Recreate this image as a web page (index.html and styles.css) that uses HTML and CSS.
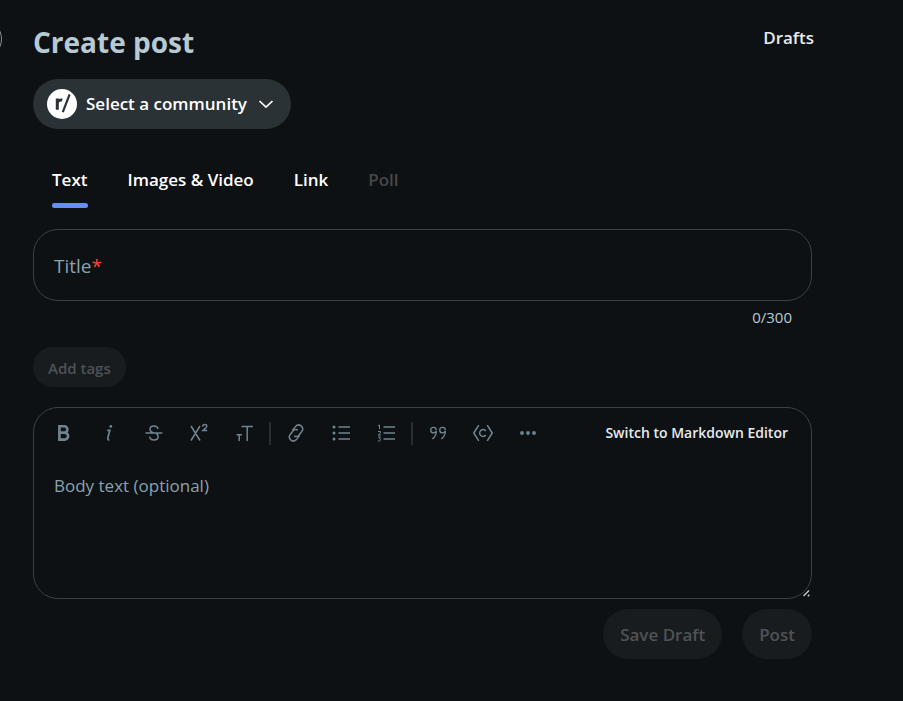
FILE: index.html
```html
<!DOCTYPE html>
<html lang="en">
<head>
<meta charset="utf-8">
<meta name="viewport" content="width=device-width, initial-scale=1">
<title>Create post</title>
<link rel="stylesheet" href="styles.css">
</head>
<body>
<span class="nav-toggle" aria-hidden="true"></span>
<main class="page">
  <header class="page-header">
    <h1 class="page-title">Create post</h1>
    <a class="drafts" href="#drafts">Drafts</a>
  </header>

  <button class="community" type="button">
    <svg class="community-logo" viewBox="0 0 30 30" aria-hidden="true">
      <circle cx="15" cy="15" r="15" fill="#fff"/>
      <path d="M10.3 20.8V9.6M10.3 14.4c.3-2.6 2.300-3.800 5-3.400" fill="none" stroke="#2a3236" stroke-width="3"/>
      <path d="M15.800 23.200L22.600 5.400" fill="none" stroke="#2a3236" stroke-width="2.2"/>
    </svg>
    <span>Select a community</span>
    <svg class="chevron" viewBox="0 0 20 20" aria-hidden="true"><path d="M3.500 7l6.500 6.200L16.500 7"/></svg>
  </button>

  <nav class="tabs">
    <button class="tab tab-active" type="button">Text</button>
    <button class="tab" type="button">Images &amp; Video</button>
    <button class="tab" type="button">Link</button>
    <button class="tab" type="button" disabled>Poll</button>
  </nav>

  <form class="form">
    <div class="title-field">
      <input class="title-input" id="title" type="text" maxlength="300" required>
      <label class="title-label" for="title">Title<span class="required">*</span></label>
    </div>
    <div class="counter">0/300</div>

    <button class="pill pill-small" type="button" disabled>Add tags</button>

    <div class="editor">
      <div class="toolbar">
        <div class="tool-group">
          <button class="tool" type="button" aria-label="Bold"><svg viewBox="0 0 20 20"><path class="heavy" d="M5.400 3.200h4.800a3.200 3.200 0 0 1 0 6.400H5.400zM5.400 9.600h5.200a3.500 3.500 0 0 1 0 7H5.400z"/></svg></button>
          <button class="tool" type="button" aria-label="Italic"><svg viewBox="0 0 20 20"><path class="medium" d="M8.200 7.300H10.800L8.900 14.800c-.3 1.500.2 2.200 1.500 2.200"/><circle class="dot" cx="11.800" cy="3.400" r="1.400"/></svg></button>
          <button class="tool" type="button" aria-label="Strikethrough"><svg viewBox="0 0 20 20"><path d="M1.500 10h17M14 6c-.3-1.800-1.800-3-4-3S6 4.300 6 6.200c0 2 1.500 3 4 3.800M12 10.500c1.400.6 2.200 1.600 2.200 3 0 2-1.700 3.500-4.200 3.500S5.900 15.700 5.600 13.600"/></svg></button>
          <button class="tool" type="button" aria-label="Superscript"><svg viewBox="0 0 20 20"><path d="M2 3l9 14.500M11 3L2 17.500M13.800 3.600c.1-2.800 4-2.700 4-.3 0 1.500-2.500 2.300-3.900 4.200H18.200"/></svg></button>
          <button class="tool" type="button" aria-label="Heading"><svg viewBox="0 0 20 20"><path d="M7.500 3.500H19M13.200 3.500v14.500M2.500 11.700h5.500M5.200 11.700V18"/></svg></button>
        </div>
        <span class="divider"></span>
        <div class="tool-group">
          <button class="tool" type="button" aria-label="Link"><svg viewBox="0 0 20 20"><path d="M6.400 7.400l3.200-4a4 4 0 0 1 6.300 4.900l-3 3.900a3.300 3.300 0 0 1-4.700.6M13.600 12.600l-3.200 4a4 4 0 0 1-6.300-4.900l3-3.900a3.300 3.300 0 0 1 4.700-.6"/></svg></button>
          <button class="tool" type="button" aria-label="Bulleted list"><svg viewBox="0 0 20 20"><path d="M7.500 4H19M7.500 10H19M7.500 16H19"/><circle class="dot" cx="3" cy="4" r="1.500"/><circle class="dot" cx="3" cy="10" r="1.500"/><circle class="dot" cx="3" cy="16" r="1.500"/></svg></button>
          <button class="tool" type="button" aria-label="Numbered list"><svg viewBox="0 0 20 20"><path d="M7.500 4H19M7.500 10H19M7.500 16H19"/><path class="thin" d="M2 2.800l1.500-.8V6M2 8.500h2.500V10L2 12h3M2 14h2.500l-1.200 1.600c1.800 0 1.800 2.400-.3 2.400H1.800"/></svg></button>
        </div>
        <span class="divider"></span>
        <div class="tool-group">
          <button class="tool" type="button" aria-label="Quote"><svg viewBox="0 0 20 20"><path class="fine" d="M8.300 7a2.800 2.800 0 1 0-2.800 2.900c1.500 0 2.500-.8 2.800-2.200.3 3-1.200 6-4 8.200M17.300 7a2.800 2.800 0 1 0-2.800 2.900c1.500 0 2.500-.8 2.800-2.200.3 3-1.200 6-4 8.200"/></svg></button>
          <button class="tool" type="button" aria-label="Code"><svg viewBox="0 0 20 20"><path d="M5.800 2.200L.8 10l5 7.800M14.200 2.200l5 7.800-5 7.800M12.800 8a3.400 3.400 0 1 0 0 4"/></svg></button>
          <button class="tool" type="button" aria-label="More"><svg viewBox="0 0 20 20"><circle class="dot" cx="4" cy="10" r="1.900"/><circle class="dot" cx="10" cy="10" r="1.900"/><circle class="dot" cx="16" cy="10" r="1.900"/></svg></button>
        </div>
        <button class="switch" type="button">Switch to Markdown Editor</button>
      </div>
      <textarea class="body-input" aria-label="Body text" placeholder="Body text (optional)"></textarea>
      <svg class="grip" viewBox="0 0 7 7" aria-hidden="true"><path d="M.5 6L6 .5M4.800 6.300L6.300 4.800"/></svg>
    </div>

    <div class="actions">
      <button class="pill" type="button" disabled>Save Draft</button>
      <button class="pill" type="submit" disabled>Post</button>
    </div>
  </form>
</main>
</body>
</html>
```
FILE: styles.css
```css
* {
  box-sizing: border-box;
}

body {
  margin: 0;
  min-height: 100vh;
  overflow-x: hidden;
  background: #0e1113;
  color: #fff;
  font-family: "Segoe UI", "Open Sans", "Noto Sans", sans-serif;
  font-size: 17px;
  line-height: 24px;
}

button,
input,
textarea {
  font: inherit;
  color: inherit;
}

button {
  border: 0;
  padding: 0;
  background: none;
}

/* Edge of the round navigation toggle that sits outside the column */
.nav-toggle {
  position: absolute;
  top: 19px;
  left: -38px;
  width: 40px;
  height: 40px;
  border: 1px solid #8b8e90;
  border-radius: 50%;
}

.page {
  padding: 20px 91px 42px 33px;
}

.page-header {
  display: flex;
  justify-content: space-between;
  align-items: flex-start;
  height: 59px;
}

.page-title {
  margin: 0;
  padding-top: 2px;
  color: #b7cad4;
  font-size: 28px;
  line-height: 40px;
  font-weight: 700;
}

.drafts {
  padding-top: 6px;
  margin-right: -2px;
  color: #e5ebee;
  font-weight: 600;
  text-decoration: none;
}

.community {
  display: flex;
  align-items: center;
  gap: 9px;
  height: 50px;
  padding: 0 15px 0 14px;
  border-radius: 25px;
  background: #2a3236;
  font-weight: 600;
}

.community-logo {
  width: 30px;
  height: 30px;
}

.chevron {
  width: 20px;
  height: 20px;
  fill: none;
  stroke: #fff;
  stroke-width: 1.7;
}

.tabs {
  display: flex;
  gap: 40px;
  margin-top: 39px;
  padding: 0 19px;
}

.tab {
  position: relative;
  height: 40px;
  padding-bottom: 16px;
  font-weight: 600;
}

.tab-active::after {
  content: "";
  position: absolute;
  left: 0;
  right: 0;
  bottom: 0;
  height: 5px;
  border-radius: 3px;
  background: #648efc;
}

.tab:disabled {
  color: #45484a;
}

.form {
  margin-top: 21px;
}

.title-field {
  position: relative;
}

.title-input {
  display: block;
  width: 100%;
  height: 72px;
  padding: 0 20px;
  border: 1px solid #3e4142;
  border-radius: 25px;
  background: transparent;
  outline: 0;
}

.title-label {
  position: absolute;
  top: 25px;
  left: 21px;
  color: #8ba2ad;
  font-size: 19px;
}

.required {
  color: #ff4538;
}

.counter {
  margin-top: 6px;
  padding-right: 20px;
  color: #b7cad4;
  font-size: 15px;
  line-height: 20px;
  text-align: right;
}

.pill {
  height: 50px;
  padding: 2px 17px 0;
  border-radius: 25px;
  background: #181c1f;
  color: #4f5254;
  font-weight: 600;
}

.pill-small {
  display: block;
  height: 40px;
  margin-top: 20px;
  padding: 2px 15px 0;
  border-radius: 20px;
  font-size: 15px;
}

.editor {
  position: relative;
  margin-top: 20px;
  border: 1px solid #3e4142;
  border-radius: 25px;
}

.toolbar {
  display: flex;
  align-items: center;
  gap: 5px;
  height: 50px;
  padding: 0 23px 0 10px;
}

.tool-group {
  display: flex;
  gap: 5px;
}

.tool {
  display: grid;
  place-items: center;
  width: 40px;
  height: 40px;
}

.tool svg {
  width: 20px;
  height: 20px;
  fill: none;
  stroke: #6f858f;
  stroke-width: 1.5;
}

.tool .heavy {
  stroke-width: 2.6;
}

.tool .medium {
  stroke-width: 1.7;
}

.tool .fine {
  stroke-width: 1.3;
}

.tool .thin {
  stroke-width: 1;
}

.tool .dot {
  fill: #6f858f;
  stroke: none;
}

.divider {
  width: 2px;
  height: 23px;
  background: #2a2d2f;
}

.switch {
  margin-left: auto;
  color: #e5ebee;
  font-size: 14px;
  font-weight: 600;
}

.body-input {
  display: block;
  width: 100%;
  height: 140px;
  padding: 16px 20px;
  border: 0;
  background: transparent;
  outline: 0;
  resize: none;
}

.body-input::placeholder {
  color: #8ba2ad;
  opacity: 1;
}

.grip {
  position: absolute;
  right: 1px;
  bottom: 1px;
  width: 7px;
  height: 7px;
  fill: none;
  stroke: #c9cbcc;
  stroke-width: 1.4;
}

.actions {
  display: flex;
  justify-content: flex-end;
  gap: 20px;
  margin-top: 10px;
}
```
